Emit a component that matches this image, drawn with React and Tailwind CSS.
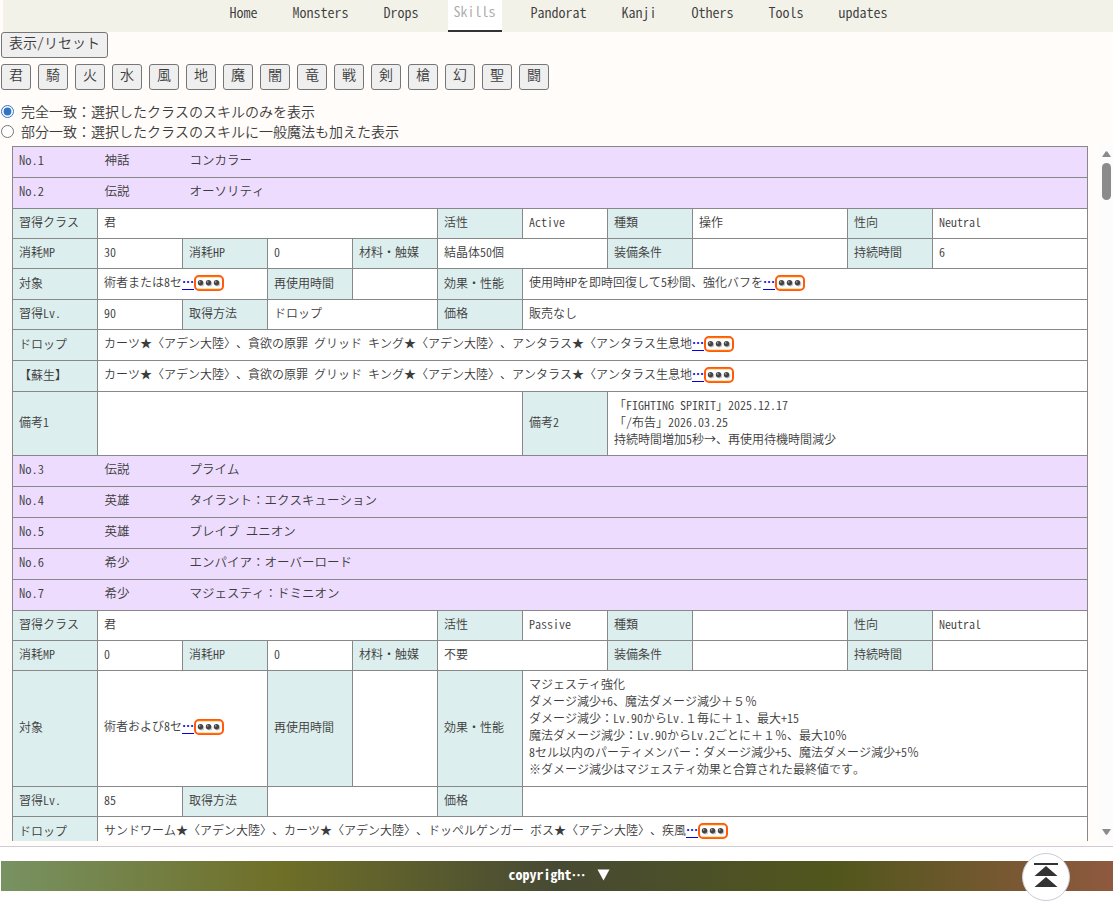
import { Fragment } from 'react';
import { clsx } from 'clsx';

const NAV = ['Home', 'Monsters', 'Drops', 'Skills', 'Pandorat', 'Kanji', 'Others', 'Tools', 'updates'];

const CLASSES = ['君', '騎', '火', '水', '風', '地', '魔', '闇', '竜', '戦', '剣', '槍', '幻', '聖', '闘'];

const MODES = [
  { id: 'exact', label: '完全一致：選択したクラスのスキルのみを表示' },
  { id: 'partial', label: '部分一致：選択したクラスのスキルに一般魔法も加えた表示' },
];

const COLS = [
  'w-[85px]', 'w-[85px]', 'w-[85px]', 'w-[85px]', 'w-[85px]', 'w-[85px]',
  'w-[85px]', 'w-[85px]', 'w-[155px]', 'w-[85px]', 'w-[155px]',
];

const SKILLS = [
  { no: 'No.1', rank: '神話', name: 'コンカラー' },
  {
    no: 'No.2',
    rank: '伝説',
    name: 'オーソリティ',
    rows: [
      { h: 'h-[30px]', cells: [{ th: '習得クラス' }, { td: '君', span: 4 }, { th: '活性' }, { td: 'Active' }, { th: '種類' }, { td: '操作' }, { th: '性向' }, { td: 'Neutral' }] },
      { h: 'h-[30px]', cells: [{ th: '消耗MP' }, { td: '30' }, { th: '消耗HP' }, { td: '0' }, { th: '材料・触媒' }, { td: '結晶体50個', span: 2 }, { th: '装備条件' }, { td: '' }, { th: '持続時間' }, { td: '6' }] },
      { h: 'h-[31px]', cells: [{ th: '対象' }, { td: '術者または8セ', span: 2, more: true }, { th: '再使用時間' }, { td: '' }, { th: '効果・性能' }, { td: '使用時HPを即時回復して5秒間、強化バフを', span: 5, more: true }] },
      { h: 'h-[30px]', cells: [{ th: '習得Lv.' }, { td: '90' }, { th: '取得方法' }, { td: 'ドロップ', span: 2 }, { th: '価格' }, { td: '販売なし', span: 5 }] },
      { h: 'h-[31px]', cells: [{ th: 'ドロップ' }, { td: 'カーツ★〈アデン大陸〉、貪欲の原罪 グリッド キング★〈アデン大陸〉、アンタラス★〈アンタラス生息地', span: 10, more: true }] },
      { h: 'h-[31px]', cells: [{ th: '【蘇生】' }, { td: 'カーツ★〈アデン大陸〉、貪欲の原罪 グリッド キング★〈アデン大陸〉、アンタラス★〈アンタラス生息地', span: 10, more: true }] },
      { h: 'h-[64px]', cells: [{ th: '備考1' }, { td: '', span: 5 }, { th: '備考2' }, { td: '「FIGHTING SPIRIT」2025.12.17\n「/布告」2026.03.25\n持続時間増加5秒→、再使用待機時間減少', span: 4 }] },
    ],
  },
  { no: 'No.3', rank: '伝説', name: 'プライム' },
  { no: 'No.4', rank: '英雄', name: 'タイラント：エクスキューション' },
  { no: 'No.5', rank: '英雄', name: 'ブレイブ ユニオン' },
  { no: 'No.6', rank: '希少', name: 'エンパイア：オーバーロード' },
  {
    no: 'No.7',
    rank: '希少',
    name: 'マジェスティ：ドミニオン',
    rows: [
      { h: 'h-[30px]', cells: [{ th: '習得クラス' }, { td: '君', span: 4 }, { th: '活性' }, { td: 'Passive' }, { th: '種類' }, { td: '' }, { th: '性向' }, { td: 'Neutral' }] },
      { h: 'h-[30px]', cells: [{ th: '消耗MP' }, { td: '0' }, { th: '消耗HP' }, { td: '0' }, { th: '材料・触媒' }, { td: '不要', span: 2 }, { th: '装備条件' }, { td: '' }, { th: '持続時間' }, { td: '' }] },
      { h: 'h-[116px]', cells: [{ th: '対象' }, { td: '術者および8セ', span: 2, more: true }, { th: '再使用時間' }, { td: '' }, { th: '効果・性能' }, { td: 'マジェスティ強化\nダメージ減少+6、魔法ダメージ減少＋５％\nダメージ減少：Lv.90からLv.１毎に＋１、最大+15\n魔法ダメージ減少：Lv.90からLv.2ごとに＋１％、最大10％\n8セル以内のパーティメンバー：ダメージ減少+5、魔法ダメージ減少+5％\n※ダメージ減少はマジェスティ効果と合算された最終値です。', span: 5 }] },
      { h: 'h-[30px]', cells: [{ th: '習得Lv.' }, { td: '85' }, { th: '取得方法' }, { td: '', span: 2 }, { th: '価格' }, { td: '', span: 5 }] },
      { h: 'h-[31px]', cells: [{ th: 'ドロップ' }, { td: 'サンドワーム★〈アデン大陸〉、カーツ★〈アデン大陸〉、ドッペルゲンガー ボス★〈アデン大陸〉、疾風', span: 10, more: true }] },
    ],
  },
];

// The page sets latin text half width; these characters have to stay full width
function Text({ children }) {
  return children.split(/([：＋％０-９…]+)/).map((part, i) =>
    i % 2 ? (
      <span key={i} className="[font-feature-settings:normal]">{part}</span>
    ) : (
      part
    )
  );
}

function MoreBadge() {
  return (
    <svg className="inline-block align-[-4px]" width="30" height="16" viewBox="0 0 30 16">
      <rect x="1" y="1" width="28" height="14" rx="4" fill="#fff" stroke="#ff5a0a" strokeWidth="2" />
      <path d="M4 2h22M4 14h22" stroke="#ffa01e" strokeWidth=".7" />
      {[7, 15, 23].map((x) => (
        <g key={x}>
          <circle cx={x + 0.6} cy="8.8" r="2.7" fill="#c8c8c8" />
          <circle cx={x - 0.5} cy="7.8" r="2.7" fill="#444" />
          <circle cx={x - 1.3} cy="6.9" r="0.8" fill="#aaa" />
        </g>
      ))}
    </svg>
  );
}

function Cell({ cell }) {
  if (cell.th) {
    return (
      <th className="border border-[#888] bg-[#dceeed] px-1.5 pb-1 text-left font-[350] whitespace-nowrap">
        {cell.th}
      </th>
    );
  }
  return (
    <td colSpan={cell.span || 1} className="border border-[#888] bg-white px-1.5 pb-[5px] whitespace-pre">
      <Text>{cell.td}</Text>
      {cell.more && (
        <>
          <span className="font-bold text-[#0000ee] underline decoration-1 underline-offset-2">…</span>
          <MoreBadge />
        </>
      )}
    </td>
  );
}

function SkillTable() {
  return (
    <table className="w-[1076px] table-fixed border-collapse text-xs leading-[17px]">
      <colgroup>
        {COLS.map((w, i) => (
          <col key={i} className={w} />
        ))}
      </colgroup>
      <tbody>
        {SKILLS.map((skill) => (
          <Fragment key={skill.no}>
            <tr className="h-[31px] border border-[#888] bg-[#eedcff] text-[12.5px]">
              <td className="px-1.5 pb-1.5">{skill.no}</td>
              <td className="px-[7px] pb-1.5">{skill.rank}</td>
              <td className="px-[7px] pb-1.5" colSpan={9}>
                <Text>{skill.name}</Text>
              </td>
            </tr>
            {skill.rows?.map((row, i) => (
              <tr key={i} className={row.h}>
                {row.cells.map((cell, j) => (
                  <Cell key={j} cell={cell} />
                ))}
              </tr>
            ))}
          </Fragment>
        ))}
      </tbody>
    </table>
  );
}

function Scrollbar() {
  return (
    <div className="flex w-3.5 flex-col items-center bg-[#fcfcfc] pt-[5px] pb-1.5">
      <svg width="9" height="6" viewBox="0 0 9 6">
        <path d="M0 6 3.500 .8Q4.500 -.4 5.500 .8L9 6Z" fill="#8b8b8b" />
      </svg>
      <div className="mt-1.5 h-[37px] w-[9px] rounded-full bg-[#8b8b8b]" />
      <svg className="mt-auto" width="9" height="6" viewBox="0 0 9 6">
        <path d="M0 0 3.500 5.200Q4.500 6.400 5.500 5.200L9 0Z" fill="#8b8b8b" />
      </svg>
    </div>
  );
}

export default function App() {
  return (
    <div
      lang="ja"
      className="relative flex h-[903px] w-[1113px] flex-col overflow-hidden bg-[#fffcf9] font-['Noto_Sans_CJK_JP',sans-serif] text-sm font-[350] text-[#3c3c3c] [font-feature-settings:'hwid'] [font-kerning:none] [text-spacing-trim:space-all]"
    >
      <nav className="ml-[3px] flex h-8 shrink-0 gap-[23px] bg-[#f2f2e9] pl-[221px]">
        {NAV.map((item) => (
          <a
            key={item}
            className={clsx(
              'h-8 pr-[6.5px] pl-[5.5px]',
              item === 'Skills' ? 'border-b-2 border-[#333] bg-white leading-[22px] text-[#aaa]' : 'leading-6'
            )}
          >
            {item}
          </a>
        ))}
      </nav>

      <div className="flex pl-px">
        <button className="h-[26px] w-[107px] rounded-[3px] border border-[#767676] bg-[#efefef] pb-1.5 leading-[18px]">
          表示/リセット
        </button>
      </div>
      <div className="mt-1.5 flex gap-[7px] pl-px">
        {CLASSES.map((c) => (
          <button key={c} className="h-[26px] w-[30px] rounded-[3px] border border-[#767676] bg-[#efefef] pb-1.5 leading-[18px]">
            {c}
          </button>
        ))}
      </div>

      <div className="mt-[11px] flex flex-col pl-px">
        {MODES.map((m, i) => (
          <label key={m.id} className="flex h-5 items-center gap-[7px]">
            <input type="radio" name="mode" defaultChecked={i === 0} className="size-[13px] accent-[#3474c4]" />
            <span>
              <Text>{m.label}</Text>
            </span>
          </label>
        ))}
      </div>

      <div className="mt-[5px] flex h-[695px] shrink-0 justify-between overflow-hidden pl-3">
        <SkillTable />
        <Scrollbar />
      </div>

      <footer className="mt-[5px] flex-1 border-t border-[#ccccd4] bg-white pt-3.5 pl-px">
        <div className="flex h-[30px] items-center justify-center bg-[linear-gradient(90deg,#789262_0%,#6f6f28_25%,#474a33_50%,#51561c_75%,#8f593f_100%)] pb-1 pl-1 font-bold text-white">
          <span className="whitespace-pre">
            <Text>copyright… </Text>
          </span>
          <svg className="mt-0.5 ml-1" width="13" height="12" viewBox="0 0 13 12">
            <path d="M.5.5h12l-6 11z" fill="#fff" />
          </svg>
        </div>
      </footer>

      <button className="absolute top-[853px] left-[1022px] size-12 rounded-full border border-[#c8ccd6] bg-white">
        <svg className="mx-auto -mt-[3px]" width="24" height="26" viewBox="0 0 24 26">
          <path d="M0 0h24v2H0zM12 3 23.500 13H.5zM12 14 23.500 24H.5z" fill="#333" />
        </svg>
      </button>
    </div>
  );
}
